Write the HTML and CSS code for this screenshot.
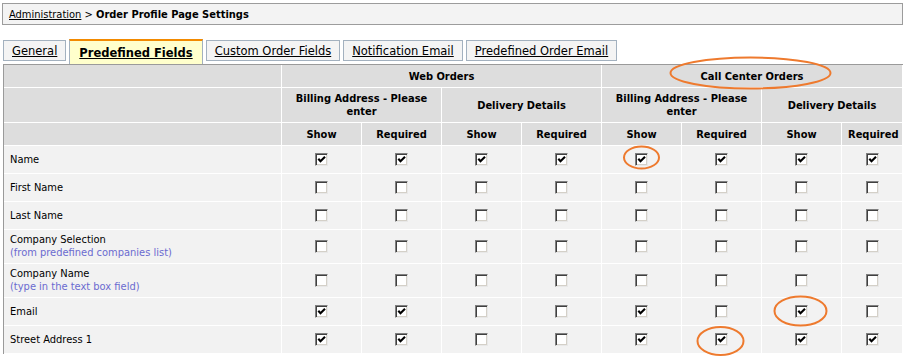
FILE: index.html
```html
<!DOCTYPE html>
<html lang="en">
<head>
  <meta charset="UTF-8">
  <title>Order Profile Page Settings</title>
  <link rel="stylesheet" href="styles.css">
</head>
<body>
  <div class="page">
    <div class="breadcrumb">
      <a href="#">Administration</a> &gt; <b>Order Profile Page Settings</b>
    </div>

    <div class="tabs">
      <a class="tab" href="#">General</a>
      <a class="tab active" href="#">Predefined Fields</a>
      <a class="tab" href="#">Custom Order Fields</a>
      <a class="tab" href="#">Notification Email</a>
      <a class="tab" href="#">Predefined Order Email</a>
    </div>

    <table class="fields">
      <colgroup>
        <col class="c-label">
        <col class="c-box"><col class="c-box"><col class="c-box"><col class="c-box">
        <col class="c-box"><col class="c-box"><col class="c-box"><col class="c-last">
      </colgroup>
      <thead>
        <tr class="h1">
          <th></th>
          <th colspan="4">Web Orders</th>
          <th colspan="4">Call Center Orders</th>
        </tr>
        <tr class="h2">
          <th></th>
          <th colspan="2">Billing Address - Please enter</th>
          <th colspan="2">Delivery Details</th>
          <th colspan="2">Billing Address - Please enter</th>
          <th colspan="2">Delivery Details</th>
        </tr>
        <tr class="h3">
          <th></th>
          <th>Show</th><th>Required</th><th>Show</th><th>Required</th>
          <th>Show</th><th>Required</th><th>Show</th><th>Required</th>
        </tr>
      </thead>
      <tbody id="rows"></tbody>
    </table>

    <svg class="marks" width="903" height="356" viewBox="0 0 903 356">
      <ellipse cx="750.5" cy="73" rx="80" ry="15.5"/>
      <ellipse cx="641.5" cy="157.5" rx="17.5" ry="11"/>
      <ellipse cx="800.5" cy="311" rx="26" ry="14.5"/>
      <ellipse cx="720.5" cy="341" rx="23" ry="14"/>
    </svg>
  </div>

  <script>
    const fields = [
      { name: 'Name', boxes: [1, 1, 1, 1, 1, 1, 1, 1] },
      { name: 'First Name', boxes: [0, 0, 0, 0, 0, 0, 0, 0] },
      { name: 'Last Name', boxes: [0, 0, 0, 0, 0, 0, 0, 0] },
      { name: 'Company Selection', note: '(from predefined companies list)', boxes: [0, 0, 0, 0, 0, 0, 0, 0] },
      { name: 'Company Name', note: '(type in the text box field)', boxes: [0, 0, 0, 0, 0, 0, 0, 0] },
      { name: 'Email', boxes: [1, 1, 0, 0, 1, 0, 1, 0] },
      { name: 'Street Address 1', boxes: [1, 1, 0, 0, 1, 1, 1, 1] }
    ];

    const tick = '<svg width="9" height="9" viewBox="0 0 9 9"><path d="M1.3 3.8 L3.5 6.3 L8 1.7" fill="none" stroke="#000" stroke-width="2.1"/></svg>';

    const body = document.getElementById('rows');
    fields.forEach(f => {
      const tr = document.createElement('tr');
      let html = '<td class="label">' + f.name;
      if (f.note) html += '<br><span class="note">' + f.note + '</span>';
      html += '</td>';
      f.boxes.forEach(b => {
        html += '<td class="cb"><span class="box">' + (b ? tick : '') + '</span></td>';
      });
      tr.innerHTML = html;
      body.appendChild(tr);
    });
  </script>
</body>
</html>
```

FILE: styles.css
```css
* {
  box-sizing: border-box;
  margin: 0;
  padding: 0;
}

html, body {
  width: 903px;
  height: 356px;
  overflow: hidden;
  background: #ffffff;
}

body {
  font-family: Tahoma, "DejaVu Sans Condensed", "Liberation Sans", sans-serif;
  font-size: 11px;
  color: #000;
}

.page {
  position: relative;
  padding: 3px 0 0 2px;
}

a {
  color: #000;
}

.breadcrumb {
  width: 901px;
  height: 22px;
  padding: 4px 6px;
  line-height: 13px;
  background: #f3f3f3;
  border: 1px solid #9c9c9c;
}

.tabs {
  display: flex;
  align-items: flex-start;
  gap: 3px;
  margin: 14px 0 0 1px;
  height: 25px;
}

.tab {
  display: block;
  margin-top: 1px;
  height: 21px;
  padding: 3px 8px 0;
  font-family: Verdana, "DejaVu Sans", sans-serif;
  font-size: 11.5px;
  line-height: 14px;
  background: #f4f4f4;
  border: 1px solid #a3b1bf;
}

.tab.active {
  margin-top: 0;
  height: 25px;
  padding: 5px 9px 0;
  font-weight: bold;
  background: #ffffcc;
  border-top: 2px solid #f28a00;
  border-bottom: none;
}

.fields {
  margin-left: 1px;
  width: 900px;
  table-layout: fixed;
  border-collapse: separate;
  border-spacing: 0;
  border-top: 1px solid #9a9a9a;
  border-left: 1px solid #9a9a9a;
}

.c-label { width: 278px; }
.c-box { width: 80px; }
.c-last { width: 61px; }

.fields th,
.fields td {
  border-right: 1px solid #ffffff;
  border-bottom: 1px solid #ffffff;
  line-height: 13px;
}

.fields th {
  background: #dddddd;
  font-weight: bold;
  text-align: center;
  padding: 4px 6px;
}

.h1 th { height: 23px; }
.h3 th { height: 23px; }

.fields td {
  background: #f2f2f2;
  padding: 3px 6px 4px;
  height: 28px;
}

.fields td.cb {
  text-align: center;
  padding: 0;
}

.note {
  color: #6b6bd0;
}

.box {
  display: inline-block;
  width: 13px;
  height: 13px;
  vertical-align: middle;
  background: #ffffff;
  border: 1px solid;
  border-color: #808080 #e8e8e8 #e8e8e8 #808080;
  box-shadow: inset 1px 1px 0 #404040, inset -1px -1px 0 #d4d0c8;
  padding: 1px 0 0 1px;
}

.box svg {
  display: block;
}

.marks {
  position: absolute;
  left: 0;
  top: 0;
  pointer-events: none;
}

.marks ellipse {
  fill: none;
  stroke: #ee7a2e;
  stroke-width: 2;
}
```
